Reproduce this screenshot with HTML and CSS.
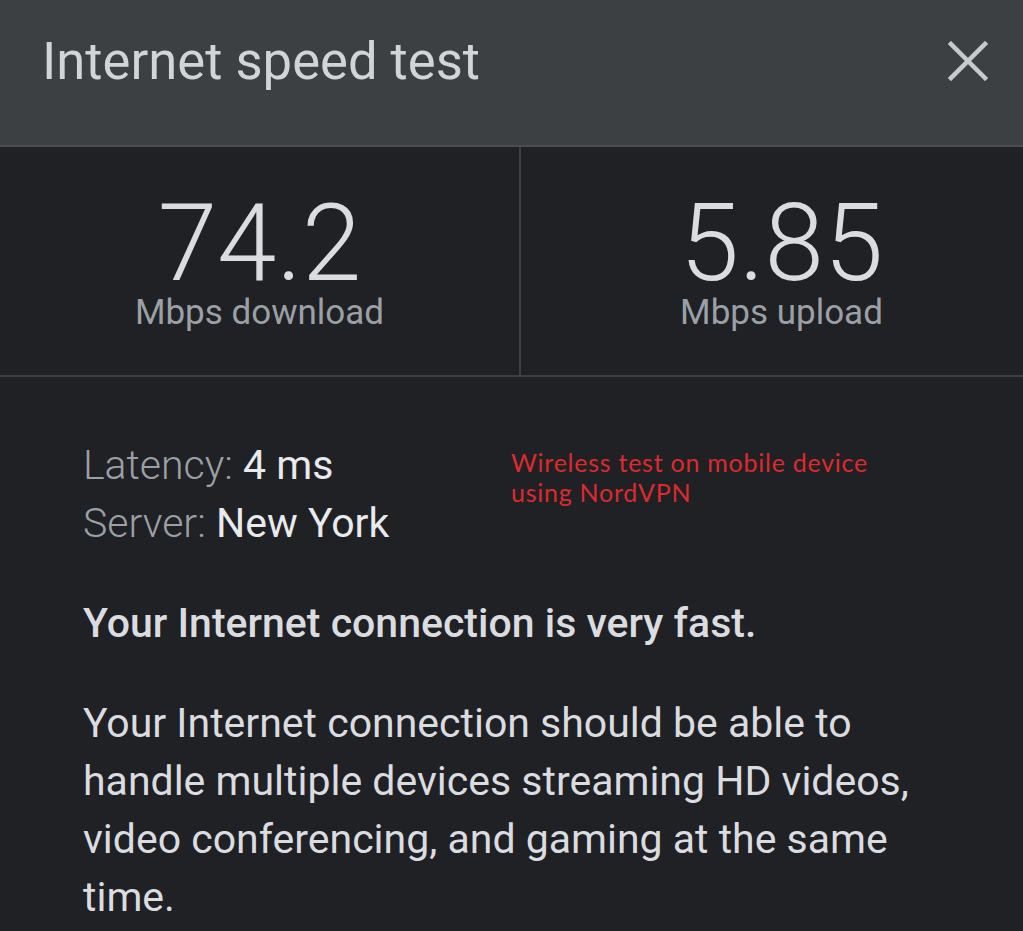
FILE: index.html
```html
<!DOCTYPE html>
<html>
<head>
    <title>Internet speed test</title>
    <link rel="stylesheet" href="styles.css">
</head>
<body>
    <div class="header">
        <h1 class="title">Internet speed test</h1>
        <button class="close" aria-label="Close">
            <svg width="40" height="40" viewBox="0 0 40 40">
                <path d="M3 3 L37 37 M37 3 L3 37" stroke="#c8cacc" stroke-width="4.5" stroke-linecap="square" fill="none"/>
            </svg>
        </button>
    </div>

    <div class="stats">
        <div class="stat stat-left">
            <div class="stat-value">74.2</div>
            <div class="stat-label">Mbps download</div>
        </div>
        <div class="stat">
            <div class="stat-value">5.85</div>
            <div class="stat-label">Mbps upload</div>
        </div>
    </div>

    <div class="details">
        <div class="info-row">
            <div class="info">
                <div><span class="info-key">Latency:</span> <span class="info-val">4 ms</span></div>
                <div><span class="info-key">Server:</span> <span class="info-val">New York</span></div>
            </div>
            <div class="note">Wireless test on mobile device<br>using NordVPN</div>
        </div>
        <p class="verdict">Your Internet connection is very fast.</p>
        <p class="desc">Your Internet connection should be able to handle multiple devices streaming HD videos, video conferencing, and gaming at the same time.</p>
    </div>
</body>
</html>
```

FILE: styles.css
```css
body {
    margin: 0;
    background-color: #202124;
    font-family: Roboto, "Noto Sans", sans-serif;
    overflow: hidden;
}

.header {
    height: 145px;
    background-color: #3c4043;
    border-bottom: 2px solid #4a4e52;
    display: flex;
    justify-content: space-between;
    align-items: flex-start;
    padding: 0 35px 0 42px;
}

.title {
    margin: 0;
    padding-top: 35px;
    font-size: 52.6px;
    line-height: 53px;
    font-weight: 400;
    color: #d2d4d6;
}

.close {
    margin-top: 41px;
    padding: 0;
    border: none;
    background: none;
    width: 40px;
    height: 40px;
    cursor: pointer;
}

.stats {
    width: 1042px;
    display: grid;
    grid-template-columns: 521px 1fr;
    height: 228px;
    border-bottom: 2px solid #3e4144;
}

.stat {
    text-align: center;
    padding-top: 43px;
}

.stat-left {
    border-right: 2px solid #3c4043;
}

.stat-value {
    font-size: 107px;
    line-height: 107px;
    font-weight: 300;
    color: #dadce0;
}

.stat-label {
    margin-top: 1px;
    font-size: 35px;
    line-height: 30px;
    color: #9aa0a6;
}

.details {
    padding: 59px 0 0 83px;
}

.info-row {
    display: flex;
}

.info {
    width: 428px;
    font-size: 41px;
    line-height: 58px;
}

.info-key {
    font-weight: 300;
    color: #9aa0a6;
}

.info-val {
    color: #e8eaed;
}

.note {
    padding-top: 11px;
    font-family: Lato, "Open Sans", sans-serif;
    font-size: 25px;
    line-height: 30px;
    letter-spacing: 0.75px;
    color: #dc2a2f;
}

.verdict {
    margin: 42px 0 0;
    font-size: 41px;
    line-height: 58px;
    font-weight: 500;
    color: #dadce0;
}

.desc {
    margin: 42px 0 0;
    width: 860px;
    font-size: 41px;
    line-height: 58px;
    color: #dadce0;
}
```
